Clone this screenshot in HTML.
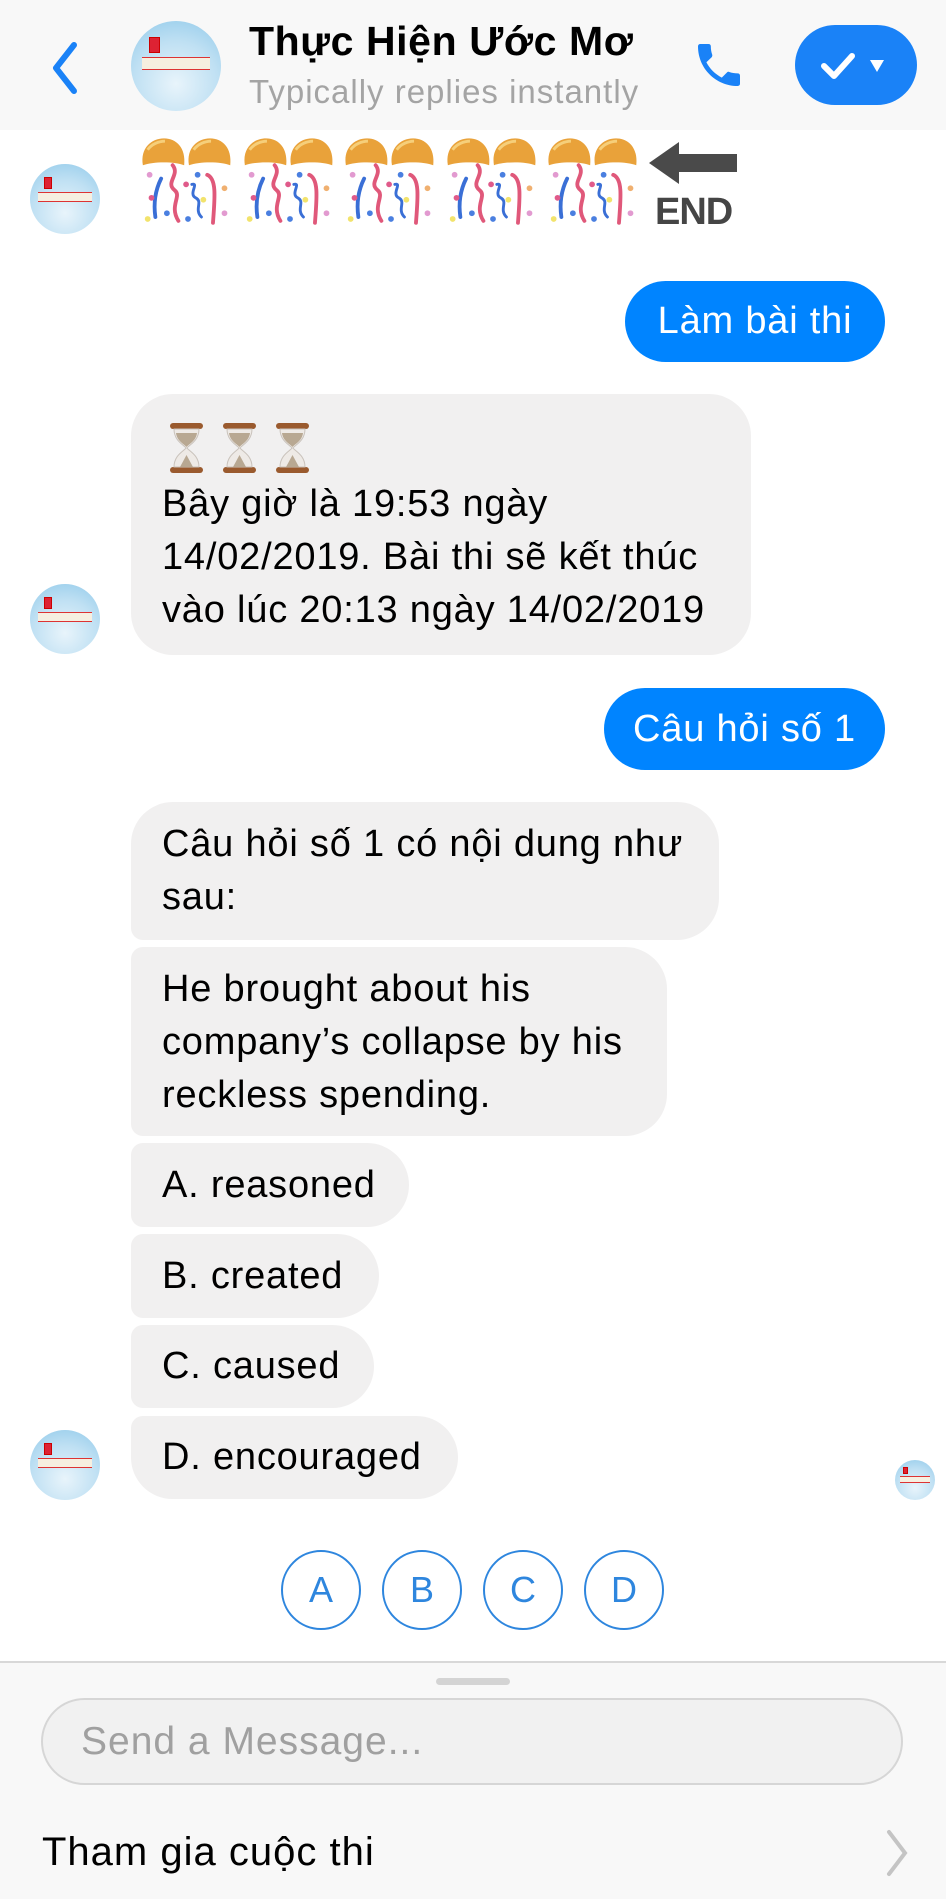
<!DOCTYPE html>
<html><head><meta charset="utf-8"><style>
*{margin:0;padding:0;box-sizing:border-box}
body{width:946px;height:1899px;background:#fff;font-family:"Liberation Sans",sans-serif;position:relative;overflow:hidden;color:#000}
.a{position:absolute}
.hdr{left:0;top:0;width:946px;height:130px;background:#f8f8f8}
.av{position:absolute;border-radius:50%;background:radial-gradient(circle at 50% 70%,#e8f4fb 0,#bfe0f3 55%,#8fc9ea 100%);overflow:hidden}
.av:before{content:"";position:absolute;left:12%;right:12%;top:40%;height:12%;background:#f6efe0;border-top:1px solid #d33;border-bottom:1px solid #d33}
.av:after{content:"";position:absolute;left:20%;top:18%;width:12%;height:18%;background:#d23;box-shadow:inset 0 0 0 1px #c00}
.b{position:absolute;background:#f1f0f0;border-radius:42px;font-size:38px;letter-spacing:0.8px;line-height:53px;padding-left:31px;color:#000;white-space:nowrap}
.me{position:absolute;background:#0084ff;color:#fff;border-radius:42px;font-size:38px;letter-spacing:0.8px;text-align:center}
.c{position:absolute;top:1550px;width:80px;height:80px;border:2px solid #2e86de;border-radius:50%;color:#2e86de;font-size:36px;text-align:center;line-height:76px}
</style></head><body>
<div class="a hdr"></div>
<svg class="a" style="left:48px;top:40px" width="34" height="56"><path d="M26 5 L8 28 L26 51" stroke="#1a82f7" stroke-width="6" fill="none" stroke-linecap="round" stroke-linejoin="round"/></svg>
<div class="av" style="left:131px;top:21px;width:90px;height:90px"></div>
<div class="a" style="left:249px;top:18px;font-size:41px;font-weight:bold;letter-spacing:0.6px">Thực Hiện Ước Mơ</div>
<div class="a" style="left:249px;top:73px;font-size:33px;letter-spacing:1px;color:#a4a4a4">Typically replies instantly</div>
<svg class="a" style="left:690px;top:37px" width="58" height="56" viewBox="0 0 24 24"><path d="M6.6 10.8c1.4 2.8 3.8 5.1 6.6 6.6l2.2-2.2c.3-.3.7-.4 1-.2 1.1.4 2.3.6 3.6.6.6 0 1 .4 1 1V20c0 .6-.4 1-1 1C10.6 21 3 13.4 3 4c0-.6.4-1 1-1h3.5c.6 0 1 .4 1 1 0 1.3.2 2.5.6 3.6.1.3 0 .7-.2 1L6.6 10.8z" fill="#1a82f7"/></svg>
<div class="a" style="left:795px;top:25px;width:122px;height:80px;border-radius:40px;background:#1a82f7"></div>
<svg class="a" style="left:820px;top:48px" width="80" height="36"><path d="M4 18 L14 28 L32 8" stroke="#fff" stroke-width="6" fill="none" stroke-linecap="round" stroke-linejoin="round"/><path d="M50 12 L64 12 L57 24 Z" fill="#fff"/></svg>

<svg width="0" height="0" style="position:absolute"><defs><symbol id="cf" viewBox="0 0 100 95">
<path d="M3 30 C0 12 12 2 25 2 C38 2 48 12 46 30 C36 26 14 26 3 30Z" fill="#e9a23a"/><path d="M51 30 C48 12 60 2 73 2 C86 2 96 12 94 30 C84 26 62 26 51 30Z" fill="#e9a23a"/>
<path d="M8 14 C12 8 20 5 26 5" stroke="#f6cf7a" stroke-width="3" fill="none"/><path d="M56 14 C60 8 68 5 74 5" stroke="#f6cf7a" stroke-width="3" fill="none"/>
<path d="M22 44 C16 56 14 70 16 84" stroke="#3a6fd6" stroke-width="4" fill="none" stroke-linecap="round"/>
<path d="M34 30 C42 40 26 48 36 56 C44 62 30 72 40 88" stroke="#e0587a" stroke-width="4" fill="none" stroke-linecap="round"/>
<path d="M54 50 C62 48 50 60 58 64 C66 68 56 76 64 84" stroke="#3a6fd6" stroke-width="3" fill="none" stroke-linecap="round"/>
<path d="M70 40 C80 44 78 64 76 90" stroke="#e0587a" stroke-width="4" fill="none" stroke-linecap="round"/>
<circle cx="10" cy="40" r="3" fill="#e29ad0"/><circle cx="12" cy="64" r="3" fill="#e05a8a"/><circle cx="8" cy="86" r="3" fill="#f2e36c"/><circle cx="48" cy="50" r="3" fill="#e05a8a"/><circle cx="60" cy="40" r="3" fill="#4a7fe0"/><circle cx="28" cy="80" r="3" fill="#4a7fe0"/><circle cx="66" cy="66" r="3" fill="#f2e36c"/><circle cx="88" cy="54" r="3" fill="#f0b070"/><circle cx="88" cy="80" r="3" fill="#e29ad0"/><circle cx="50" cy="86" r="3" fill="#4a7fe0"/>
</symbol>
<symbol id="hg" viewBox="0 0 33 50">
<rect x="0" y="0" width="33" height="6" rx="3" fill="#9a5a2e"/><rect x="0" y="44" width="33" height="6" rx="3" fill="#9a5a2e"/>
<path d="M4 6 L29 6 C29 18 19 22 17 25 C19 28 29 32 29 44 L4 44 C4 32 14 28 16 25 C14 22 4 18 4 6Z" fill="#eeeae6" stroke="#c9c2bb"/>
<path d="M6 10 L27 10 C26 18 19 21 16.5 24 C14 21 7 18 6 10Z" fill="#b8a892"/><path d="M10 44 L16.5 32 L23 44Z" fill="#b8a892"/>
</symbol></defs></svg>

<div class="av" style="left:30px;top:164px;width:70px;height:70px"></div>
<svg class="a" style="left:140px;top:134px" width="96" height="96"><use href="#cf"/></svg>
<svg class="a" style="left:242px;top:134px" width="96" height="96"><use href="#cf"/></svg>
<svg class="a" style="left:343px;top:134px" width="96" height="96"><use href="#cf"/></svg>
<svg class="a" style="left:445px;top:134px" width="96" height="96"><use href="#cf"/></svg>
<svg class="a" style="left:546px;top:134px" width="96" height="96"><use href="#cf"/></svg>
<svg class="a" style="left:649px;top:140px" width="90" height="46"><path d="M0 23 L30 2 L30 14 L88 14 L88 32 L30 32 L30 44 Z" fill="#4a4a4a"/></svg>
<div class="a" style="left:655px;top:191px;font-size:38px;font-weight:bold;color:#454545;letter-spacing:-1px">END</div>

<div class="me" style="left:625px;top:281px;width:260px;height:81px;line-height:81px">Làm bài thi</div>

<div class="b" style="left:131px;top:394px;width:620px;height:261px;padding-top:84px">Bây giờ là 19:53 ngày<br>14/02/2019. Bài thi sẽ kết thúc<br>vào lúc 20:13 ngày 14/02/2019</div>
<svg class="a" style="left:170px;top:423px" width="33" height="50"><use href="#hg"/></svg>
<svg class="a" style="left:223px;top:423px" width="33" height="50"><use href="#hg"/></svg>
<svg class="a" style="left:276px;top:423px" width="33" height="50"><use href="#hg"/></svg>
<div class="av" style="left:30px;top:584px;width:70px;height:70px"></div>

<div class="me" style="left:604px;top:688px;width:281px;height:82px;line-height:82px">Câu hỏi số 1</div>

<div class="b" style="left:131px;top:802px;width:588px;height:138px;padding-top:16px;border-bottom-left-radius:12px">Câu hỏi số 1 có nội dung như<br>sau:</div>
<div class="b" style="left:131px;top:947px;width:536px;height:189px;line-height:53px;border-radius:12px 42px 42px 12px;padding-top:16px">He brought about his<br>company’s collapse by his<br>reckless spending.</div>
<div class="b" style="left:131px;top:1143px;width:278px;height:84px;line-height:84px;border-radius:12px 42px 42px 12px">A. reasoned</div>
<div class="b" style="left:131px;top:1234px;width:248px;height:84px;line-height:84px;border-radius:12px 42px 42px 12px">B. created</div>
<div class="b" style="left:131px;top:1325px;width:243px;height:83px;line-height:83px;border-radius:12px 42px 42px 12px">C. caused</div>
<div class="b" style="left:131px;top:1416px;width:327px;height:83px;line-height:83px;border-radius:12px 42px 42px 42px">D. encouraged</div>
<div class="av" style="left:30px;top:1430px;width:70px;height:70px"></div>
<div class="av" style="left:895px;top:1460px;width:40px;height:40px"></div>

<div class="c" style="left:281px">A</div>
<div class="c" style="left:382px">B</div>
<div class="c" style="left:483px">C</div>
<div class="c" style="left:584px">D</div>

<div class="a" style="left:0;top:1661px;width:946px;height:238px;background:#f8f8f8;border-top:2px solid #d8d8d8"></div>
<div class="a" style="left:436px;top:1678px;width:74px;height:7px;border-radius:4px;background:#d4d4d4"></div>
<div class="a" style="left:41px;top:1698px;width:862px;height:87px;border-radius:44px;background:#f1f1f1;border:2px solid #d6d6d6"></div>
<div class="a" style="left:81px;top:1720px;font-size:39px;letter-spacing:1px;color:#a0a0a0">Send a Message...</div>
<div class="a" style="left:42px;top:1830px;font-size:40px;letter-spacing:1px;color:#000">Tham gia cuộc thi</div>
<svg class="a" style="left:884px;top:1828px" width="26" height="50"><path d="M5 4 L21 25 L5 46" stroke="#c4c4c4" stroke-width="4" fill="none" stroke-linecap="round"/></svg>
</body></html>
